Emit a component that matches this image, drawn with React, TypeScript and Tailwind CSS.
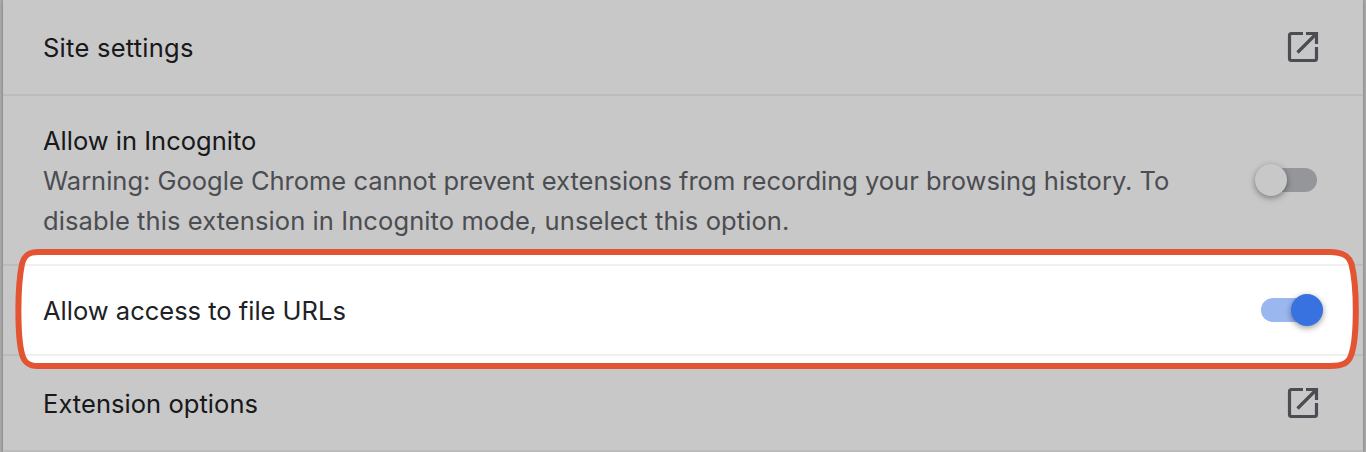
import type { ReactNode } from "react";

const OUTLINE =
  "M38 252 Q683 250.4 1330 252 C1343 252 1349 256 1351.5 264 C1354.5 276 1355.8 295 1355.8 310 C1355.8 330 1354.5 345 1351.5 354 C1349 363 1343 366 1330 366 Q683 367 38 366 C28 366 24 362 22 354 C19.5 345 18.4 330 18.4 310 C18.4 295 19.5 276 22 264 C24 256 28 252 38 252 Z";

function OpenInNew() {
  return (
    <svg className="size-10 shrink-0" viewBox="0 0 40 40" fill="none" stroke="#5f6368" strokeWidth="3.2">
      <path d="M20 6.5H8.5a2 2 0 0 0-2 2v23a2 2 0 0 0 2 2h23a2 2 0 0 0 2-2V20" />
      <path d="M23 6.5h10.5V17M33 7 14.5 25.5" />
      <path d="M27.5 5H35v7.5Z" fill="#5f6368" stroke="none" />
    </svg>
  );
}

function Toggle({ on = false }: { on?: boolean }) {
  return on ? (
    <span className="flex h-6 w-[62px] items-center justify-end rounded-full bg-linear-to-r from-[#9ab7ef] from-75% to-transparent to-75%">
      <span className="size-8 shrink-0 rounded-full bg-[#3871e0] shadow-[0_2px_6px_rgba(0,0,0,0.4)]" />
    </span>
  ) : (
    <span className="mr-1.5 flex h-6 w-[62px] items-center rounded-full bg-linear-to-r from-transparent from-25% to-[#bdc0c5] to-25%">
      <span className="size-8 shrink-0 rounded-full bg-white shadow-[0_2px_6px_rgba(0,0,0,0.4)]" />
    </span>
  );
}

function Row({ size, children }: { size: string; children: ReactNode }) {
  return (
    <div className={`flex items-center justify-between border-b-2 border-[#f0f0f0] pr-10 pl-10 ${size}`}>
      {children}
    </div>
  );
}

export default function App() {
  return (
    <main className="relative h-[452px] w-[1366px] overflow-hidden bg-[#d9d9d9] px-[3px] font-['Inter',sans-serif] text-[25.5px] leading-10 text-[#202124]">
      <div className="bg-white shadow-[0_0_3px_rgba(0,0,0,0.35)]">
        <Row size="h-24">
          <span className="pt-0.5 tracking-[0.25px]">Site settings</span>
          <OpenInNew />
        </Row>
        <Row size="h-[170px]">
          <div className="pt-0.5 whitespace-nowrap">
            <div>Allow in Incognito</div>
            <div className="tracking-[-0.01px] text-[#5f6368]">
              Warning: Google Chrome cannot prevent extensions from recording your browsing history. To
            </div>
            <div className="tracking-[0.09px] text-[#5f6368]">
              disable this extension in Incognito mode, unselect this option.
            </div>
          </div>
          <Toggle />
        </Row>
        <Row size="h-[90px]">
          <span className="pt-0.5">Allow access to file URLs</span>
          <Toggle on />
        </Row>
        <Row size="h-24">
          <span className="pt-0.5 tracking-[0.05px]">Extension options</span>
          <OpenInNew />
        </Row>
      </div>
      <svg className="pointer-events-none absolute inset-0" width="1366" height="452" viewBox="0 0 1366 452">
        <path d={`M0 0H1366V452H0Z ${OUTLINE}`} fill="#000" fillOpacity="0.216" fillRule="evenodd" />
        <path d={OUTLINE} fill="none" stroke="#e25432" strokeWidth="6" />
      </svg>
    </main>
  );
}
